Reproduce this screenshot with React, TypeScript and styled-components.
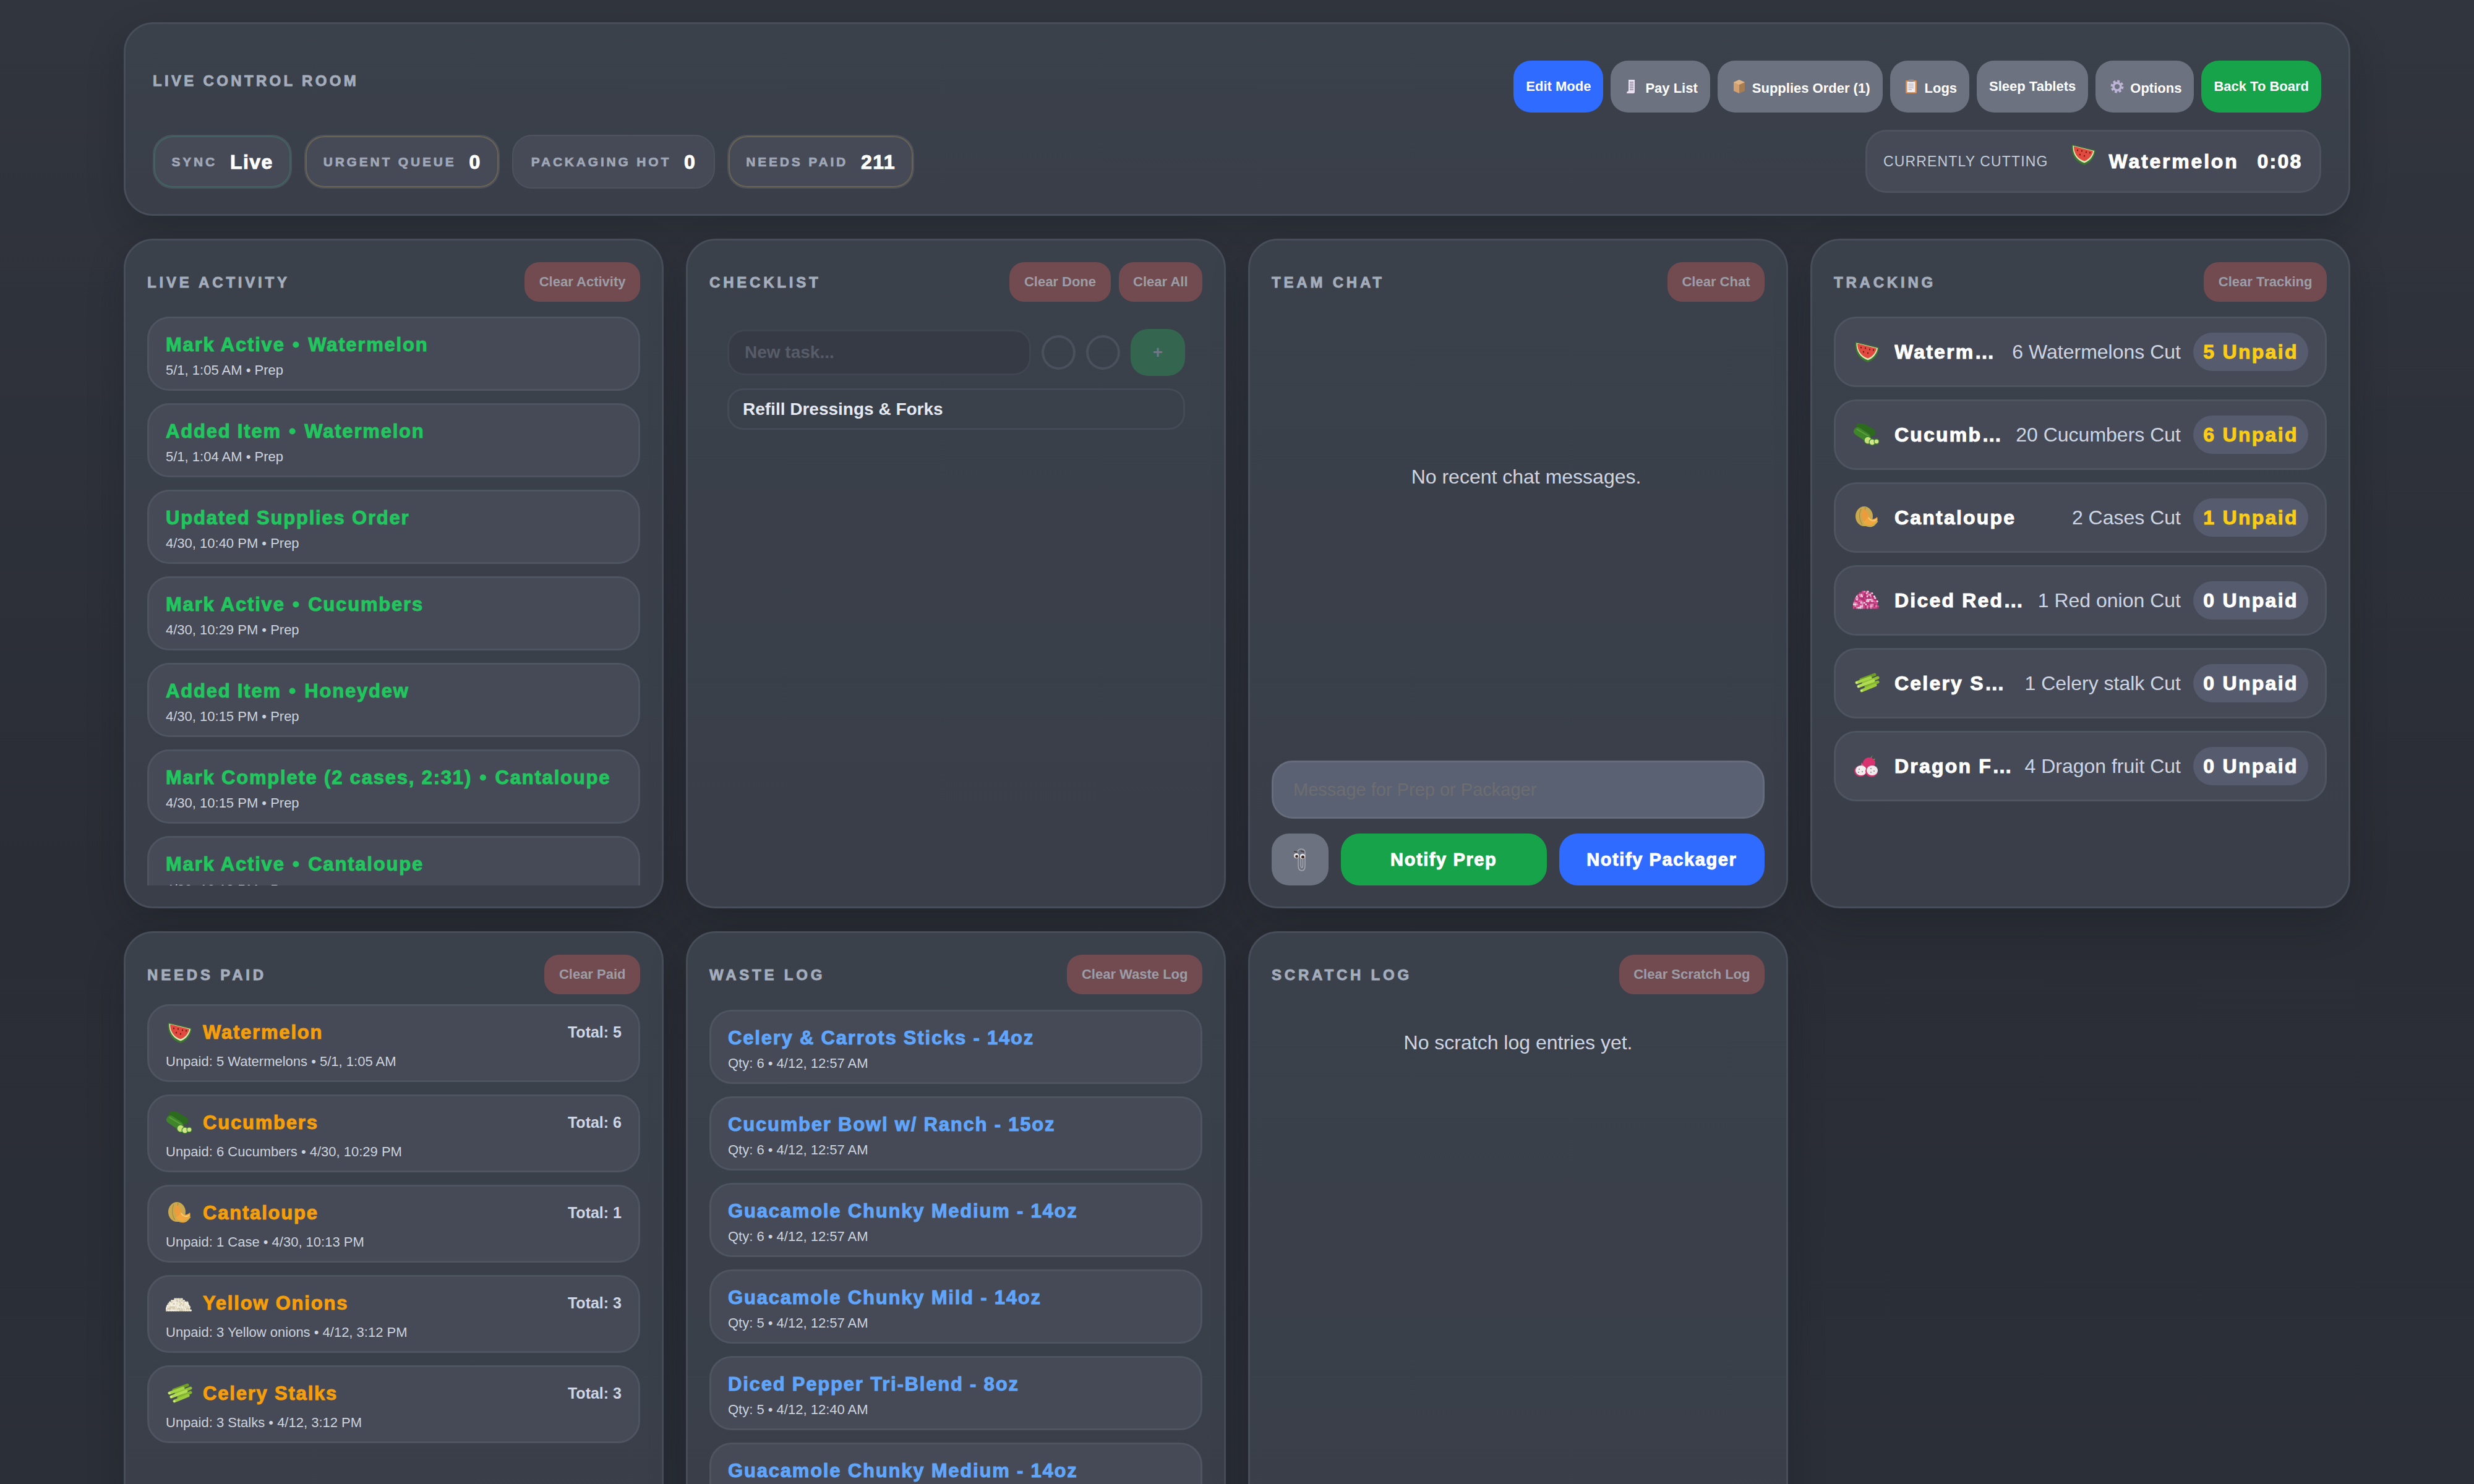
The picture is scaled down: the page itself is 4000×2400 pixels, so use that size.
import React from "react";
import styled, { createGlobalStyle } from "styled-components";

const GlobalStyle = createGlobalStyle`
  html, body {
    margin: 0;
    height: 2400px;
    overflow: hidden;
    background: #2c3038;
    font-family: "Liberation Sans", Arial, sans-serif;
  }
  * { box-sizing: border-box; }
`;

// --- drawn pictures ------------------------------------------------------

// small diced bits piled up in a dome
const Dome = ({ colors, top = 4 }: { colors: string[]; top?: number }) => {
  const dots: React.ReactNode[] = [];
  let n = 0;
  for (let y = top; y <= 31; y += 2.6) {
    const half = 20 * Math.sqrt(Math.max(0, 1 - Math.pow((31 - y) / (31 - top + 1), 2)));
    for (let x = 21 - half; x <= 21 + half; x += 2.8) {
      const pick = Math.floor(Math.abs(Math.sin(n * 12.9898) * 43758.5453)) % colors.length;
      dots.push(<circle key={n} cx={x} cy={y} r={1.7} fill={colors[pick]} />);
      n++;
    }
  }
  return <svg viewBox="0 0 44 36" width={44} height={36}>{dots}</svg>;
};

const Watermelon = () => (
  <svg viewBox="0 0 44 36" width={44} height={36}>
    <path d="M4 2 C2 16 8 30 24 35 C36 31 41 20 42 11 Z" fill="#3c7530" />
    <path d="M5.500 3.500 C5 16 11 27 24 31.500 C34 28 39 19 40 12 Z" fill="#dfe9b8" />
    <path d="M7 4.500 C7 16 13 25 24 28.500 C32 26 37 18 38 12.500 Z" fill="#e2493f" />
    <g fill="#4a1712">
      <ellipse cx="13" cy="11" rx="0.9" ry="1.500" />
      <ellipse cx="20" cy="12" rx="0.9" ry="1.500" />
      <ellipse cx="27" cy="14" rx="0.9" ry="1.500" />
      <ellipse cx="33" cy="15" rx="0.9" ry="1.500" />
      <ellipse cx="17" cy="18" rx="0.9" ry="1.500" />
      <ellipse cx="24" cy="20" rx="0.9" ry="1.500" />
    </g>
  </svg>
);

const Cucumber = () => (
  <svg viewBox="0 0 44 36" width={44} height={36}>
    <rect x="4" y="3" width="34" height="12" rx="6" fill="#2c6a1e" transform="rotate(30 21 9)" />
    <rect x="0" y="11" width="30" height="13" rx="6" fill="#3f8529" transform="rotate(34 15 17)" />
    <path d="M6 9 L26 21" stroke="#5fa33f" strokeWidth="1.500" />
    <circle cx="24" cy="27" r="6.500" fill="#3f8529" />
    <circle cx="24" cy="27" r="5.200" fill="#c7e27a" />
    <circle cx="31" cy="30" r="5.500" fill="#3f8529" />
    <circle cx="31" cy="30" r="4.300" fill="#d2e78c" />
    <circle cx="38" cy="29" r="4.500" fill="#3f8529" />
    <circle cx="38" cy="29" r="3.300" fill="#cfe585" />
  </svg>
);

const Cantaloupe = () => (
  <svg viewBox="0 0 44 36" width={44} height={36}>
    <ellipse cx="18" cy="16" rx="14" ry="16" fill="#c9a84f" />
    <path d="M13 4 C9 12 10 22 15 29 M20 1 C18 10 19 18 22 26" stroke="#a88c3c" strokeWidth="1.200" fill="none" />
    <path d="M17 4 C12 12 14 22 21 26 C27 22 27 10 17 4 Z" fill="#ee9b3c" />
    <path d="M24 15 C28 22 34 22 39 17 C42 26 34 35 25 33 C18 32 14 28 15 24 C19 25 23 21 24 15 Z" fill="#f2a63e" />
    <path d="M25 18 C29 25 35 24 38 21" stroke="#f9d68a" strokeWidth="1.500" fill="none" />
    <path d="M15 24 C18 32 30 36 40 24" stroke="#b9b054" strokeWidth="1.500" fill="none" />
  </svg>
);

const Celery = () => (
  <svg viewBox="0 0 44 36" width={44} height={36}>
    <g strokeLinecap="round" strokeWidth="5">
      <path d="M13 12 L35 4" stroke="#6f9e24" />
      <path d="M17 18 L40 9" stroke="#8fc034" />
      <path d="M6 17 L28 9" stroke="#a6d447" />
      <path d="M21 24 L40 16" stroke="#84b52e" />
      <path d="M9 23 L33 14" stroke="#b0dc52" />
      <path d="M14 30 L36 21" stroke="#9ccb3c" />
    </g>
    <g fill="#dcef9c">
      <circle cx="6" cy="17" r="1.600" />
      <circle cx="9" cy="23" r="1.600" />
      <circle cx="14" cy="30" r="1.600" />
    </g>
  </svg>
);

const DragonFruit = () => (
  <svg viewBox="0 0 44 36" width={44} height={36}>
    <path d="M32 0 L28 8 L36 6 L31 13 L24 10 Z" fill="#7db33c" />
    <ellipse cx="26" cy="13" rx="10" ry="9" fill="#d8336e" />
    <path d="M14 12 L18 18 L12 20 Z" fill="#e9568a" />
    <ellipse cx="12" cy="26" rx="10" ry="9" fill="#d8336e" />
    <ellipse cx="13" cy="25" rx="9" ry="8" fill="#f3eef0" />
    <ellipse cx="30" cy="26" rx="10" ry="9.500" fill="#d8336e" />
    <ellipse cx="31" cy="25" rx="9" ry="8" fill="#efe9ec" />
    <g fill="#333">
      <circle cx="10" cy="23" r=".8" /><circle cx="15" cy="27" r=".8" /><circle cx="9" cy="28" r=".8" />
      <circle cx="29" cy="22" r=".8" /><circle cx="34" cy="26" r=".8" /><circle cx="29" cy="28" r=".8" />
    </g>
  </svg>
);

const FOOD: Record<string, React.ReactNode> = {
  watermelon: <Watermelon />,
  cucumber: <Cucumber />,
  cantaloupe: <Cantaloupe />,
  redonion: <Dome colors={["#d6448c", "#f6cfe2", "#b22f70", "#ea86b6"]} />,
  yellowonion: <Dome colors={["#f4ecd6", "#dcd2b8", "#fbf6e8", "#efe5c8"]} top={11} />,
  celery: <Celery />,
  dragon: <DragonFruit />,
};

const ReceiptIcon = () => (
  <svg viewBox="0 0 20 24" width={20} height={24}>
    <path d="M5 1 H15 V21 Q15 23 13 23 H3 Q1 23 3 20 Q5 20 5 18 Z" fill="#e8e0f0" />
    <path d="M7 5 H13 M7 8 H13 M7 11 H13 M7 14 H13 M7 17 H13" stroke="#8a8698" strokeWidth="1.300" />
  </svg>
);

const BoxIcon = () => (
  <svg viewBox="0 0 22 24" width={22} height={24}>
    <path d="M11 1 L20 5 V19 L11 23 Z" fill="#a67c52" />
    <path d="M11 1 L2 5 V19 L11 23 Z" fill="#d3a06f" />
    <path d="M2 5 L11 9 L20 5 L11 1 Z" fill="#e0b888" />
  </svg>
);

const ClipboardIcon = () => (
  <svg viewBox="0 0 20 24" width={20} height={24}>
    <rect x="1" y="2" width="18" height="21" rx="1.500" fill="#d98d4e" />
    <rect x="3.500" y="4" width="13" height="17" fill="#f2eef0" />
    <rect x="6" y="0.500" width="8" height="4" rx="1" fill="#8f8f98" />
    <path d="M5.500 8 H14 M5.500 11 H14 M5.500 14 H14 M5.500 17 H11" stroke="#9b9aa6" strokeWidth="1.200" />
  </svg>
);

const GearIcon = () => (
  <svg viewBox="0 0 24 24" width={22} height={24}>
    <circle cx="12" cy="12" r="6.500" fill="none" stroke="#bdb4d6" strokeWidth="4" />
    <circle cx="12" cy="12" r="9.600" fill="none" stroke="#bdb4d6" strokeWidth="3.600" strokeDasharray="4.200 3.340" />
  </svg>
);

const ClippyIcon = () => (
  <svg viewBox="0 0 24 40" width={24} height={40}>
    <path d="M9 12 V30 Q9 38 15 38 Q20 38 20 30 V10 Q20 3 14 3 Q8 3 8 9 M13 12 V29 Q13 33 15 33 Q16.500 33 16.500 29 V14" fill="none" stroke="#a4a7ae" strokeWidth="1.500" />
    <circle cx="6" cy="14" r="4" fill="#e8e6e4" />
    <circle cx="16" cy="15" r="4.300" fill="#e8e6e4" />
    <circle cx="6.500" cy="15" r="2.300" fill="#3a2724" />
    <circle cx="16.500" cy="16" r="2.500" fill="#3a2724" />
    <path d="M2 7 L8 8 M13 6 L19 8" stroke="#4a3a38" strokeWidth="1.600" />
  </svg>
);

// --- page ----------------------------------------------------------------

const Page = styled.div`
  height: 2400px;
  padding: 36px 200px 0;
  overflow: hidden;
  display: flex;
  flex-direction: column;
  gap: 37px;
  background: linear-gradient(180deg, #31353e 0%, #2a2d35 60%, #2b2f37 100%);
`;

const Card = styled.section`
  background: linear-gradient(180deg, #3b414b 0%, #393e49 100%);
  border: 3px solid #474d59;
  border-radius: 48px;
  box-shadow: 0 24px 60px rgba(15, 17, 22, 0.22);
`;

const TopPanel = styled(Card)`
  flex: none;
  height: 313px;
  padding: 59px 44px 0;
  display: flex;
  flex-direction: column;
  gap: 28px;
`;

const TopRow = styled.div`
  display: flex;
  justify-content: space-between;
  align-items: flex-start;
`;

const RoomTitle = styled.h1`
  margin: 19px 0 0;
  font-size: 24px;
  font-weight: 700;
  letter-spacing: 0.18em;
  color: #a4adbc;
  -webkit-text-stroke: 0.9px #a4adbc;
`;

const Toolbar = styled.div`
  display: flex;
  gap: 12px;
`;

const colorFor = { blue: "#2f6bff", green: "#17a34a", gray: "#6c7280" };

const TopButton = styled.button<{ $tone: "blue" | "green" | "gray"; $icon?: boolean }>`
  height: 84px;
  padding: ${(p) => (p.$icon ? "6px" : "0")} 20px 0;
  display: flex;
  align-items: center;
  border: none;
  border-radius: 28px;
  background: ${(p) => colorFor[p.$tone]};
  color: #fff;
  font: 700 22px "Liberation Sans", Arial, sans-serif;
  white-space: nowrap;
`;

const ButtonGlyph = styled.span`
  width: 36px;
  margin-top: -6px;
  padding-left: 4px;
  display: flex;
  align-items: center;
`;

const StatsLine = styled.div`
  display: flex;
  justify-content: space-between;
  align-items: center;
  height: 102px;
`;

const Stats = styled.div`
  display: flex;
  gap: 20px;
`;

const Stat = styled.div<{ $tone?: string }>`
  height: 87px;
  padding: 2px 28.500px 0;
  display: flex;
  align-items: center;
  gap: 21px;
  background: #454a56;
  border: 2px solid #4d525e;
  border-radius: 32px;
  box-shadow: ${(p) => (p.$tone ? `inset 0 0 0 2px ${p.$tone}` : "none")};
`;

const StatLabel = styled.span`
  font-size: 21px;
  font-weight: 700;
  letter-spacing: 3.8px;
  color: #a0a8b8;
  -webkit-text-stroke: 0.7px #a0a8b8;
`;

const StatValue = styled.span`
  font-size: 32px;
  font-weight: 700;
  letter-spacing: 1.4px;
  color: #fff;
  -webkit-text-stroke: 1px #fff;
`;

const CuttingCard = styled.div`
  width: 737px;
  height: 102px;
  padding: 0 26px;
  display: flex;
  align-items: center;
  background: #454a56;
  border: 3px solid #4d525e;
  border-radius: 34px;
`;

const CuttingLabel = styled.span`
  font-size: 23px;
  letter-spacing: 0.05em;
  white-space: nowrap;
  color: #c3cbd9;
  margin-right: 34px;
`;

const CuttingName = styled.span`
  margin: 0 30px 0 20px;
  font-size: 32px;
  font-weight: 700;
  letter-spacing: 2.8px;
  color: #fff;
  -webkit-text-stroke: 1px #fff;
`;

const CuttingTime = styled(CuttingName)`
  margin: 0;
  letter-spacing: 2.2px;
`;

const CuttingIcon = styled.span`
  display: flex;
  margin-top: -22px;
`;

const Grid = styled.div`
  display: grid;
  grid-template-columns: repeat(4, 873px);
  grid-auto-rows: 1083px;
  gap: 37px 36px;
`;

const Panel = styled(Card)`
  padding: 35px 35px 34px;
  display: flex;
  flex-direction: column;
  min-height: 0;
  overflow: hidden;
`;

const PanelHead = styled.header<{ $after: number }>`
  flex: none;
  height: 64px;
  margin-bottom: ${(p) => p.$after}px;
  display: flex;
  justify-content: space-between;
  align-items: center;
`;

const PanelTitle = styled.h2`
  margin: 2px 0 0;
  font-size: 24px;
  font-weight: 700;
  letter-spacing: 0.2em;
  color: #a4adbc;
  -webkit-text-stroke: 0.9px #a4adbc;
`;

const HeadButtons = styled.div`
  display: flex;
  gap: 13px;
`;

const ClearButton = styled.button`
  height: 64px;
  padding: 0 23.500px;
  border: none;
  border-radius: 24px;
  background: #714b50;
  color: #9c9da6;
  font: 700 22px "Liberation Sans", Arial, sans-serif;
  white-space: nowrap;
`;

const List = styled.div`
  flex: 1;
  min-height: 0;
  overflow: hidden;
  display: flex;
  flex-direction: column;
  gap: 20px;
`;

const Item = styled.div<{ $h: number; $gap?: number; $top?: number }>`
  flex: none;
  height: ${(p) => p.$h}px;
  padding: ${(p) => p.$top ?? 9}px 27px 0;
  display: flex;
  flex-direction: column;
  justify-content: center;
  gap: ${(p) => p.$gap ?? 11}px;
  background: #454a56;
  border: 3px solid #4e5460;
  border-radius: 36px;
`;

const ItemTitle = styled.div<{ $color: string }>`
  font-size: 31px;
  font-weight: 700;
  line-height: 34px;
  letter-spacing: 1.8px;
  color: ${(p) => p.$color};
  -webkit-text-stroke: 1px ${(p) => p.$color};
`;

const Bullet = styled.span`
  margin: 0 2px;
`;

const ItemSub = styled.div`
  font-size: 22px;
  line-height: 26px;
  color: #cdd3dd;
`;

const TaskBox = styled.div`
  padding: 20px 28px 0 29px;
  display: flex;
  flex-direction: column;
  gap: 20px;
`;

const TaskForm = styled.div`
  display: flex;
  align-items: center;
`;

const TaskInput = styled.div`
  flex: 1;
  height: 74px;
  padding: 0 25px;
  display: flex;
  align-items: center;
  background: #353a45;
  border: 3px solid #404551;
  border-radius: 28px;
  font-size: 28px;
  font-weight: 700;
  color: #575c68;
`;

const Dot = styled.span`
  flex: none;
  width: 55px;
  height: 56px;
  margin-left: 17px;
  border: 4px solid #4a505c;
  border-radius: 50%;
`;

const AddButton = styled.button`
  flex: none;
  width: 88px;
  height: 76px;
  margin-left: 17px;
  border: none;
  border-radius: 28px;
  background: #33654f;
  color: #6f7783;
  font: 700 28px "Liberation Sans", Arial, sans-serif;
`;

const TaskRow = styled.div`
  height: 67px;
  padding: 0 22px;
  display: flex;
  align-items: center;
  border: 3px solid #454a57;
  border-radius: 26px;
  font-size: 28px;
  font-weight: 700;
  color: #e5e9f2;
`;

const ChatArea = styled.div`
  flex: 1;
  min-height: 0;
  padding: 265px 0 0 26px;
  text-align: center;
  font-size: 32px;
  color: #cfd5e0;
`;

const ChatInput = styled.div`
  flex: none;
  height: 94px;
  padding: 0 32px;
  display: flex;
  align-items: center;
  background: #5a6172;
  border: 3px solid #666c7c;
  border-radius: 34px;
  font-size: 29px;
  color: #6d6d70;
`;

const ChatActions = styled.div`
  flex: none;
  margin-top: 24px;
  display: flex;
  gap: 20px;
`;

const ClipButton = styled.button`
  flex: none;
  width: 92px;
  height: 84px;
  display: flex;
  align-items: center;
  justify-content: center;
  border: none;
  border-radius: 28px;
  background: #6c7280;
`;

const NotifyButton = styled.button<{ $tone: "green" | "blue" }>`
  flex: 1;
  height: 84px;
  border: none;
  border-radius: 30px;
  background: ${(p) => colorFor[p.$tone]};
  color: #fff;
  font: 700 29px "Liberation Sans", Arial, sans-serif;
  letter-spacing: 1.6px;
  -webkit-text-stroke: 1px #fff;
`;

const TrackRow = styled.div`
  flex: none;
  height: 114px;
  padding: 0 27px 0 28px;
  display: flex;
  align-items: center;
  background: #454a56;
  border: 3px solid #4e5460;
  border-radius: 36px;
`;

const TrackIcon = styled.span`
  flex: none;
  display: flex;
  margin-right: 23px;
`;

const TrackName = styled.span`
  flex: 1;
  min-width: 0;
  overflow: hidden;
  white-space: nowrap;
  text-overflow: ellipsis;
  font-size: 32px;
  font-weight: 700;
  letter-spacing: 2.2px;
  color: #fff;
  -webkit-text-stroke: 1px #fff;
`;

const TrackCut = styled.span`
  flex: none;
  margin: 0 20px 0 20px;
  font-size: 32px;
  white-space: nowrap;
  color: #cdd5e3;
`;

const UnpaidPill = styled.span<{ $hot: boolean }>`
  flex: none;
  width: 186px;
  height: 62px;
  display: flex;
  align-items: center;
  justify-content: center;
  border-radius: 31px;
  background: #565c6e;
  font-size: 32px;
  font-weight: 700;
  letter-spacing: 2.3px;
  color: ${(p) => (p.$hot ? "#facc15" : "#fff")};
  -webkit-text-stroke: 1px ${(p) => (p.$hot ? "#facc15" : "#fff")};
`;

const PaidTop = styled.div`
  display: flex;
  align-items: center;
`;

const PaidIcon = styled.span`
  flex: none;
  display: flex;
  margin-right: 16px;
`;

const PaidTotal = styled.span`
  margin-left: auto;
  font-size: 25px;
  font-weight: 700;
  color: #cfd5e2;
`;

const EmptyNote = styled.div`
  padding: 35px 0 0;
  text-align: center;
  font-size: 32px;
  color: #cfd5e0;
`;

// --- data ----------------------------------------------------------------

const activity = [
  ["Mark Active", "Watermelon", "5/1, 1:05 AM • Prep"],
  ["Added Item", "Watermelon", "5/1, 1:04 AM • Prep"],
  ["Updated Supplies Order", "", "4/30, 10:40 PM • Prep"],
  ["Mark Active", "Cucumbers", "4/30, 10:29 PM • Prep"],
  ["Added Item", "Honeydew", "4/30, 10:15 PM • Prep"],
  ["Mark Complete (2 cases, 2:31)", "Cantaloupe", "4/30, 10:15 PM • Prep"],
  ["Mark Active", "Cantaloupe", "4/30, 10:13 PM • Prep"],
];

const tracking = [
  ["watermelon", "Watermelon", "6 Watermelons Cut", "5"],
  ["cucumber", "Cucumbers", "20 Cucumbers Cut", "6"],
  ["cantaloupe", "Cantaloupe", "2 Cases Cut", "1"],
  ["redonion", "Diced Red Onions", "1 Red onion Cut", "0"],
  ["celery", "Celery Stalks", "1 Celery stalk Cut", "0"],
  ["dragon", "Dragon Fruit", "4 Dragon fruit Cut", "0"],
];

const paid = [
  ["watermelon", "Watermelon", "5", "Unpaid: 5 Watermelons • 5/1, 1:05 AM"],
  ["cucumber", "Cucumbers", "6", "Unpaid: 6 Cucumbers • 4/30, 10:29 PM"],
  ["cantaloupe", "Cantaloupe", "1", "Unpaid: 1 Case • 4/30, 10:13 PM"],
  ["yellowonion", "Yellow Onions", "3", "Unpaid: 3 Yellow onions • 4/12, 3:12 PM"],
  ["celery", "Celery Stalks", "3", "Unpaid: 3 Stalks • 4/12, 3:12 PM"],
];

const waste = [
  ["Celery & Carrots Sticks - 14oz", "Qty: 6 • 4/12, 12:57 AM"],
  ["Cucumber Bowl w/ Ranch - 15oz", "Qty: 6 • 4/12, 12:57 AM"],
  ["Guacamole Chunky Medium - 14oz", "Qty: 6 • 4/12, 12:57 AM"],
  ["Guacamole Chunky Mild - 14oz", "Qty: 5 • 4/12, 12:57 AM"],
  ["Diced Pepper Tri-Blend - 8oz", "Qty: 5 • 4/12, 12:40 AM"],
  ["Guacamole Chunky Medium - 14oz", "Qty: 5 • 4/12, 12:40 AM"],
];

const App = () => (
  <Page>
    <GlobalStyle />
    <TopPanel>
      <TopRow>
        <RoomTitle>LIVE CONTROL ROOM</RoomTitle>
        <Toolbar>
          <TopButton $tone="blue">Edit Mode</TopButton>
          <TopButton $tone="gray" $icon><ButtonGlyph><ReceiptIcon /></ButtonGlyph>Pay List</TopButton>
          <TopButton $tone="gray" $icon><ButtonGlyph><BoxIcon /></ButtonGlyph>Supplies Order (1)</TopButton>
          <TopButton $tone="gray" $icon><ButtonGlyph><ClipboardIcon /></ButtonGlyph>Logs</TopButton>
          <TopButton $tone="gray">Sleep Tablets</TopButton>
          <TopButton $tone="gray" $icon><ButtonGlyph><GearIcon /></ButtonGlyph>Options</TopButton>
          <TopButton $tone="green">Back To Board</TopButton>
        </Toolbar>
      </TopRow>
      <StatsLine>
        <Stats>
          <Stat $tone="#3f6560"><StatLabel>SYNC</StatLabel><StatValue>Live</StatValue></Stat>
          <Stat $tone="#6a6450"><StatLabel>URGENT QUEUE</StatLabel><StatValue>0</StatValue></Stat>
          <Stat><StatLabel>PACKAGING HOT</StatLabel><StatValue>0</StatValue></Stat>
          <Stat $tone="#6a6450"><StatLabel>NEEDS PAID</StatLabel><StatValue>211</StatValue></Stat>
        </Stats>
        <CuttingCard>
          <CuttingLabel>CURRENTLY CUTTING</CuttingLabel>
          <CuttingIcon><Watermelon /></CuttingIcon>
          <CuttingName>Watermelon</CuttingName>
          <CuttingTime>0:08</CuttingTime>
        </CuttingCard>
      </StatsLine>
    </TopPanel>

    <Grid>
      <Panel>
        <PanelHead $after={24}>
          <PanelTitle>LIVE ACTIVITY</PanelTitle>
          <ClearButton>Clear Activity</ClearButton>
        </PanelHead>
        <List>
          {activity.map(([title, what, sub]) => (
            <Item key={sub + title} $h={120}>
              <ItemTitle $color="#22c55e">
                {title}
                {what && <> <Bullet>•</Bullet> {what}</>}
              </ItemTitle>
              <ItemSub>{sub}</ItemSub>
            </Item>
          ))}
        </List>
      </Panel>

      <Panel>
        <PanelHead $after={24}>
          <PanelTitle>CHECKLIST</PanelTitle>
          <HeadButtons>
            <ClearButton>Clear Done</ClearButton>
            <ClearButton>Clear All</ClearButton>
          </HeadButtons>
        </PanelHead>
        <TaskBox>
          <TaskForm>
            <TaskInput>New task...</TaskInput>
            <Dot />
            <Dot />
            <AddButton>+</AddButton>
          </TaskForm>
          <TaskRow>Refill Dressings &amp; Forks</TaskRow>
        </TaskBox>
      </Panel>

      <Panel>
        <PanelHead $after={0}>
          <PanelTitle>TEAM CHAT</PanelTitle>
          <ClearButton>Clear Chat</ClearButton>
        </PanelHead>
        <ChatArea>No recent chat messages.</ChatArea>
        <ChatInput>Message for Prep or Packager</ChatInput>
        <ChatActions>
          <ClipButton><ClippyIcon /></ClipButton>
          <NotifyButton $tone="green">Notify Prep</NotifyButton>
          <NotifyButton $tone="blue">Notify Packager</NotifyButton>
        </ChatActions>
      </Panel>

      <Panel>
        <PanelHead $after={24}>
          <PanelTitle>TRACKING</PanelTitle>
          <ClearButton>Clear Tracking</ClearButton>
        </PanelHead>
        <List>
          {tracking.map(([icon, name, cut, unpaid]) => (
            <TrackRow key={name}>
              <TrackIcon>{FOOD[icon]}</TrackIcon>
              <TrackName>{name}</TrackName>
              <TrackCut>{cut}</TrackCut>
              <UnpaidPill $hot={unpaid !== "0"}>{unpaid} Unpaid</UnpaidPill>
            </TrackRow>
          ))}
        </List>
      </Panel>

      <Panel>
        <PanelHead $after={16}>
          <PanelTitle>NEEDS PAID</PanelTitle>
          <ClearButton>Clear Paid</ClearButton>
        </PanelHead>
        <List>
          {paid.map(([icon, name, total, sub]) => (
            <Item key={name} $h={126} $gap={16} $top={7}>
              <PaidTop>
                <PaidIcon>{FOOD[icon]}</PaidIcon>
                <ItemTitle $color="#f59e0b">{name}</ItemTitle>
                <PaidTotal>Total: {total}</PaidTotal>
              </PaidTop>
              <ItemSub>{sub}</ItemSub>
            </Item>
          ))}
        </List>
      </Panel>

      <Panel>
        <PanelHead $after={25}>
          <PanelTitle>WASTE LOG</PanelTitle>
          <ClearButton>Clear Waste Log</ClearButton>
        </PanelHead>
        <List>
          {waste.map(([title, sub], i) => (
            <Item key={i} $h={120}>
              <ItemTitle $color="#60a5fa">{title}</ItemTitle>
              <ItemSub>{sub}</ItemSub>
            </Item>
          ))}
        </List>
      </Panel>

      <Panel>
        <PanelHead $after={25}>
          <PanelTitle>SCRATCH LOG</PanelTitle>
          <ClearButton>Clear Scratch Log</ClearButton>
        </PanelHead>
        <EmptyNote>No scratch log entries yet.</EmptyNote>
      </Panel>
    </Grid>
  </Page>
);

export default App;
